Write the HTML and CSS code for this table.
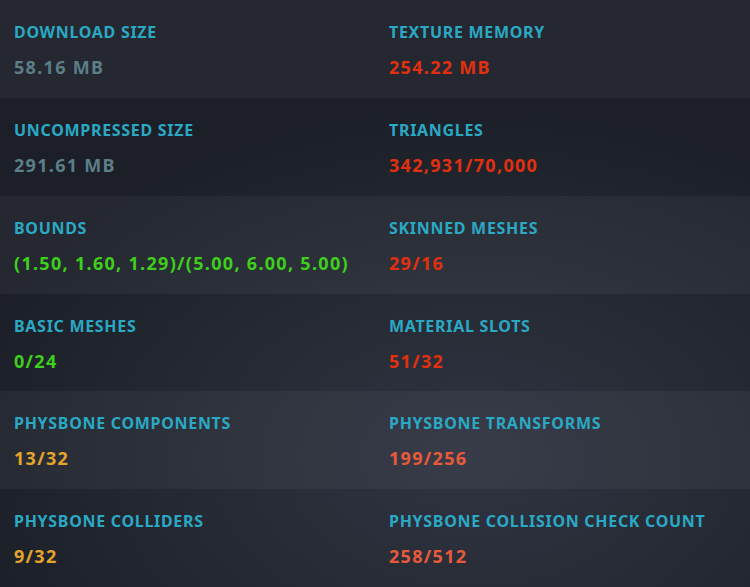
FILE: index.html
```html
<!DOCTYPE html>
<html>
<head>
<meta charset="utf-8">
<link rel="stylesheet" href="styles.css">
</head>
<body>
<div class="stats">
  <div class="row">
    <div class="cell"><div class="label">DOWNLOAD SIZE</div><div class="value grey">58.16 MB</div></div>
    <div class="cell"><div class="label">TEXTURE MEMORY</div><div class="value red">254.22 MB</div></div>
  </div>
  <div class="row">
    <div class="cell"><div class="label">UNCOMPRESSED SIZE</div><div class="value grey">291.61 MB</div></div>
    <div class="cell"><div class="label">TRIANGLES</div><div class="value red">342,931/70,000</div></div>
  </div>
  <div class="row">
    <div class="cell"><div class="label">BOUNDS</div><div class="value green">(1.50, 1.60, 1.29)/(5.00, 6.00, 5.00)</div></div>
    <div class="cell"><div class="label">SKINNED MESHES</div><div class="value red">29/16</div></div>
  </div>
  <div class="row">
    <div class="cell"><div class="label">BASIC MESHES</div><div class="value green">0/24</div></div>
    <div class="cell"><div class="label">MATERIAL SLOTS</div><div class="value red">51/32</div></div>
  </div>
  <div class="row">
    <div class="cell"><div class="label">PHYSBONE COMPONENTS</div><div class="value orange">13/32</div></div>
    <div class="cell"><div class="label">PHYSBONE TRANSFORMS</div><div class="value salmon">199/256</div></div>
  </div>
  <div class="row">
    <div class="cell"><div class="label">PHYSBONE COLLIDERS</div><div class="value orange">9/32</div></div>
    <div class="cell"><div class="label">PHYSBONE COLLISION CHECK COUNT</div><div class="value salmon">258/512</div></div>
  </div>
</div>
</body>
</html>
```

FILE: styles.css
```css
html, body {
  margin: 0;
  padding: 0;
  height: 100%;
}
body {
  background: radial-gradient(ellipse 70% 60% at 63% 78%, #303441 0%, #252a34 50%, #1c1f27 100%);
  font-family: "Noto Sans", "Open Sans", sans-serif;
  overflow: hidden;
}
.stats {
  height: 100vh;
  display: grid;
  grid-template-rows: repeat(6, 1fr);
}
.row {
  display: grid;
  grid-template-columns: 375px 375px;
}
.row:nth-child(odd) {
  background: rgba(255, 255, 255, 0.045);
}
.cell {
  padding: 22px 0 0 14px;
  display: flex;
  flex-direction: column;
  gap: 13px;
}
.label {
  color: #2aa8c4;
  font-weight: 700;
  font-size: 16px;
  line-height: 20px;
  letter-spacing: 0.7px;
}
.value {
  font-weight: 700;
  font-size: 18px;
  line-height: 24px;
  letter-spacing: 1.3px;
}
.grey { color: #5b7e89; }
.red { color: #e0300f; }
.green { color: #3ecf1c; }
.orange { color: #e2a42b; }
.salmon { color: #e65a3b; }
```
